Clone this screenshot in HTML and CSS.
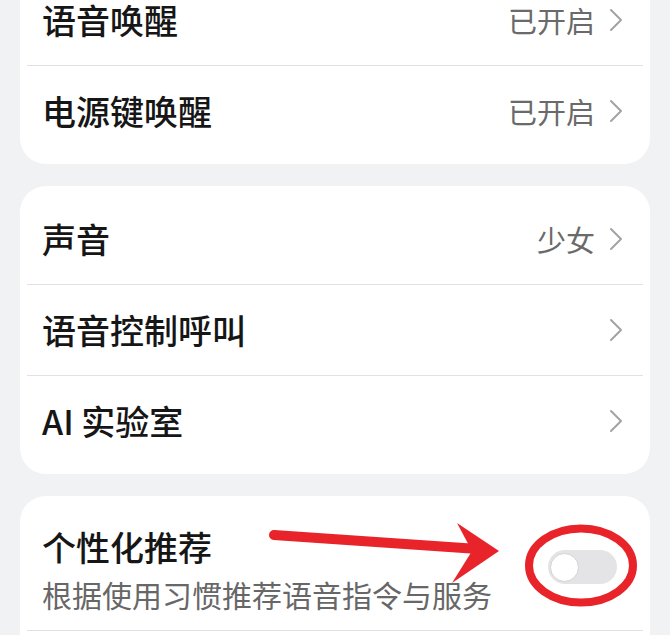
FILE: index.html
```html
<!DOCTYPE html>
<html lang="zh-CN">
<head>
<meta charset="utf-8">
<title>语音设置</title>
<link rel="stylesheet" href="styles.css">
</head>
<body>
<div class="page">
  <section class="card">
    <div class="row">
      <span class="label">语音唤醒</span>
      <span class="value">已开启</span>
      <svg class="chev" viewBox="0 0 14 24"><path d="M2 2 L12 12 L2 22"/></svg>
    </div>
    <div class="divider"></div>
    <div class="row">
      <span class="label">电源键唤醒</span>
      <span class="value">已开启</span>
      <svg class="chev" viewBox="0 0 14 24"><path d="M2 2 L12 12 L2 22"/></svg>
    </div>
  </section>

  <section class="card">
    <div class="row">
      <span class="label">声音</span>
      <span class="value">少女</span>
      <svg class="chev" viewBox="0 0 14 24"><path d="M2 2 L12 12 L2 22"/></svg>
    </div>
    <div class="divider"></div>
    <div class="row">
      <span class="label">语音控制呼叫</span>
      <svg class="chev" viewBox="0 0 14 24"><path d="M2 2 L12 12 L2 22"/></svg>
    </div>
    <div class="divider"></div>
    <div class="row">
      <span class="label">AI 实验室</span>
      <svg class="chev" viewBox="0 0 14 24"><path d="M2 2 L12 12 L2 22"/></svg>
    </div>
  </section>

  <section class="card card-last">
    <div class="row row-tall">
      <div class="text-block">
        <span class="label">个性化推荐</span>
        <span class="sub">根据使用习惯推荐语音指令与服务</span>
      </div>
      <div class="toggle"><div class="knob"></div></div>
    </div>
    <div class="divider"></div>
    <div class="row"></div>
    <svg class="annot" viewBox="0 0 630 140" width="630" height="140">
      <line x1="254" y1="39" x2="458" y2="53" class="shaft"/>
      <polygon points="437,27 479,55 432,87 452,55" class="head"/>
      <ellipse cx="561" cy="69.5" rx="52" ry="37" class="ring"/>
    </svg>
  </section>
</div>
</body>
</html>
```

FILE: styles.css
```css
html, body {
  margin: 0;
  padding: 0;
  background: #f1f2f4;
  overflow: hidden;
}
body {
  font-family: "Noto Sans CJK SC", "Noto Sans", sans-serif;
}
.page {
  margin-top: -33px;
  padding: 0 20px;
  display: flex;
  flex-direction: column;
  gap: 22px;
}
.card {
  background: #ffffff;
  border-radius: 26px;
  padding: 8px 0;
  position: relative;
}
.row {
  height: 90px;
  display: flex;
  align-items: center;
  padding: 0 27px 0 22px;
}
.row-tall {
  height: 126px;
  padding-right: 33px;
}
.label {
  flex: 1;
  font-size: 34px;
  line-height: 40px;
  font-weight: 500;
  color: #161616;
}
.value {
  font-size: 29px;
  color: #6a6a6a;
  margin-right: 14px;
}
.chev {
  width: 14px;
  height: 24px;
  fill: none;
  stroke: #a3a3a3;
  stroke-width: 2;
  stroke-linecap: round;
  stroke-linejoin: round;
}
.divider {
  height: 1px;
  background: #e2e2e4;
  margin: 0 7px;
}
.text-block {
  flex: 1;
  display: flex;
  flex-direction: column;
  gap: 7px;
  padding-top: 6px;
}
.sub {
  font-size: 30px;
  line-height: 40px;
  color: #676767;
}
.toggle {
  width: 69px;
  height: 34px;
  border-radius: 17px;
  background: #e4e4e6;
  display: flex;
  align-items: center;
  padding-left: 2px;
  box-sizing: border-box;
}
.knob {
  width: 29px;
  height: 29px;
  border-radius: 50%;
  background: #ffffff;
  border: 1px solid #d2d2d2;
  box-sizing: border-box;
}
.annot {
  position: absolute;
  left: 0;
  top: 0;
  pointer-events: none;
}
.shaft {
  stroke: #e8242a;
  stroke-width: 10;
  stroke-linecap: round;
}
.head {
  fill: #e8242a;
}
.ring {
  fill: none;
  stroke: #e8242a;
  stroke-width: 8;
}
```
